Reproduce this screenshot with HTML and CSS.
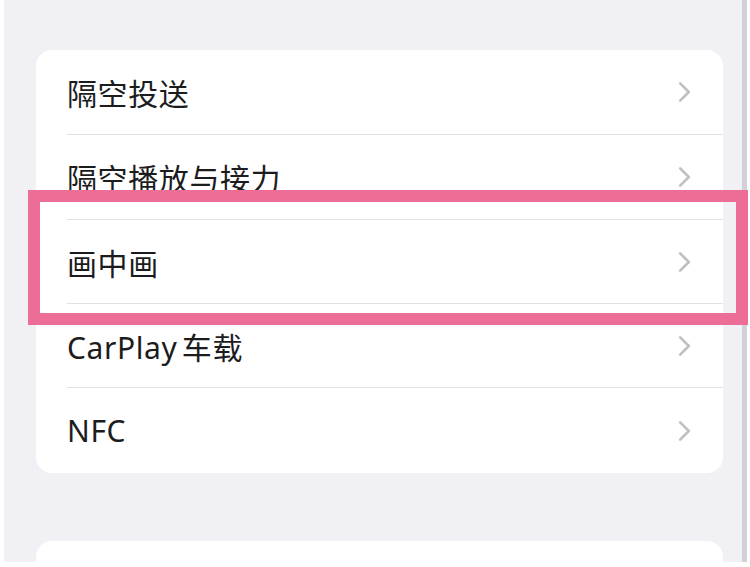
FILE: index.html
```html
<!DOCTYPE html>
<html lang="zh-CN">

<head>
  <meta charset="UTF-8" />
  <meta name="viewport" content="width=device-width, initial-scale=1.0"/>
  <title>通用</title>
  <link rel="stylesheet" href="styles.css">
</head>
<body>
  <div class="screen">
    <div class="group">
      <div class="row">
        <span class="label">隔空投送</span>
        <svg class="chevron" viewBox="0 0 12 20"><path d="M2 2 L10 10 L2 18"/></svg>
      </div>
      <div class="row">
        <span class="label">隔空播放与接力</span>
        <svg class="chevron" viewBox="0 0 12 20"><path d="M2 2 L10 10 L2 18"/></svg>
      </div>
      <div class="row">
        <span class="label">画中画</span>
        <svg class="chevron" viewBox="0 0 12 20"><path d="M2 2 L10 10 L2 18"/></svg>
      </div>
      <div class="row">
        <span class="label">CarPlay 车载</span>
        <svg class="chevron" viewBox="0 0 12 20"><path d="M2 2 L10 10 L2 18"/></svg>
      </div>
      <div class="row">
        <span class="label">NFC</span>
        <svg class="chevron" viewBox="0 0 12 20"><path d="M2 2 L10 10 L2 18"/></svg>
      </div>
    </div>

    <div class="group next"></div>
  </div>

  <!-- highlight frame drawn over the 画中画 row -->
  <div class="highlight"></div>
</body>
</html>
```

FILE: styles.css
```css
* {
  margin: 0;
  padding: 0;
  box-sizing: border-box;
  font-family: 'Noto Sans', 'Noto Sans CJK SC', sans-serif;
}

body {
  background: #ffffff;
  width: 750px;
  height: 567px;
  overflow: hidden;
  position: relative;
}

.screen {
  margin-left: 4px;
  width: 743px;
  height: 562px;
  background: #f0f0f5;
  border-right: 5px solid #d2d2d6;
  padding: 50px 0 0 32px;
  overflow: hidden;
}

.group {
  width: 687px;
  background: #ffffff;
  border-radius: 16px;
  padding-left: 31px;
}

.group.next {
  margin-top: 68px;
  height: 60px;
}

.row {
  height: 85px;
  display: flex;
  align-items: center;
  justify-content: space-between;
  padding-right: 32px;
  border-bottom: 1px solid #e2e2e5;
}

.row:nth-child(3),
.row:nth-child(4) {
  height: 84px;
}

.row:last-child {
  border-bottom: none;
  height: 85px;
}

.label {
  font-size: 30px;
  color: #1c1c1e;
  letter-spacing: 0.6px;
  word-spacing: -4px;
}

.chevron {
  width: 13px;
  height: 22px;
}

.chevron path {
  fill: none;
  stroke: #bfbfc4;
  stroke-width: 2.4;
  stroke-linecap: round;
  stroke-linejoin: round;
}

.highlight {
  position: absolute;
  left: 28px;
  top: 190px;
  width: 720px;
  height: 135px;
  border: 12px solid #ec6e96;
}
```
